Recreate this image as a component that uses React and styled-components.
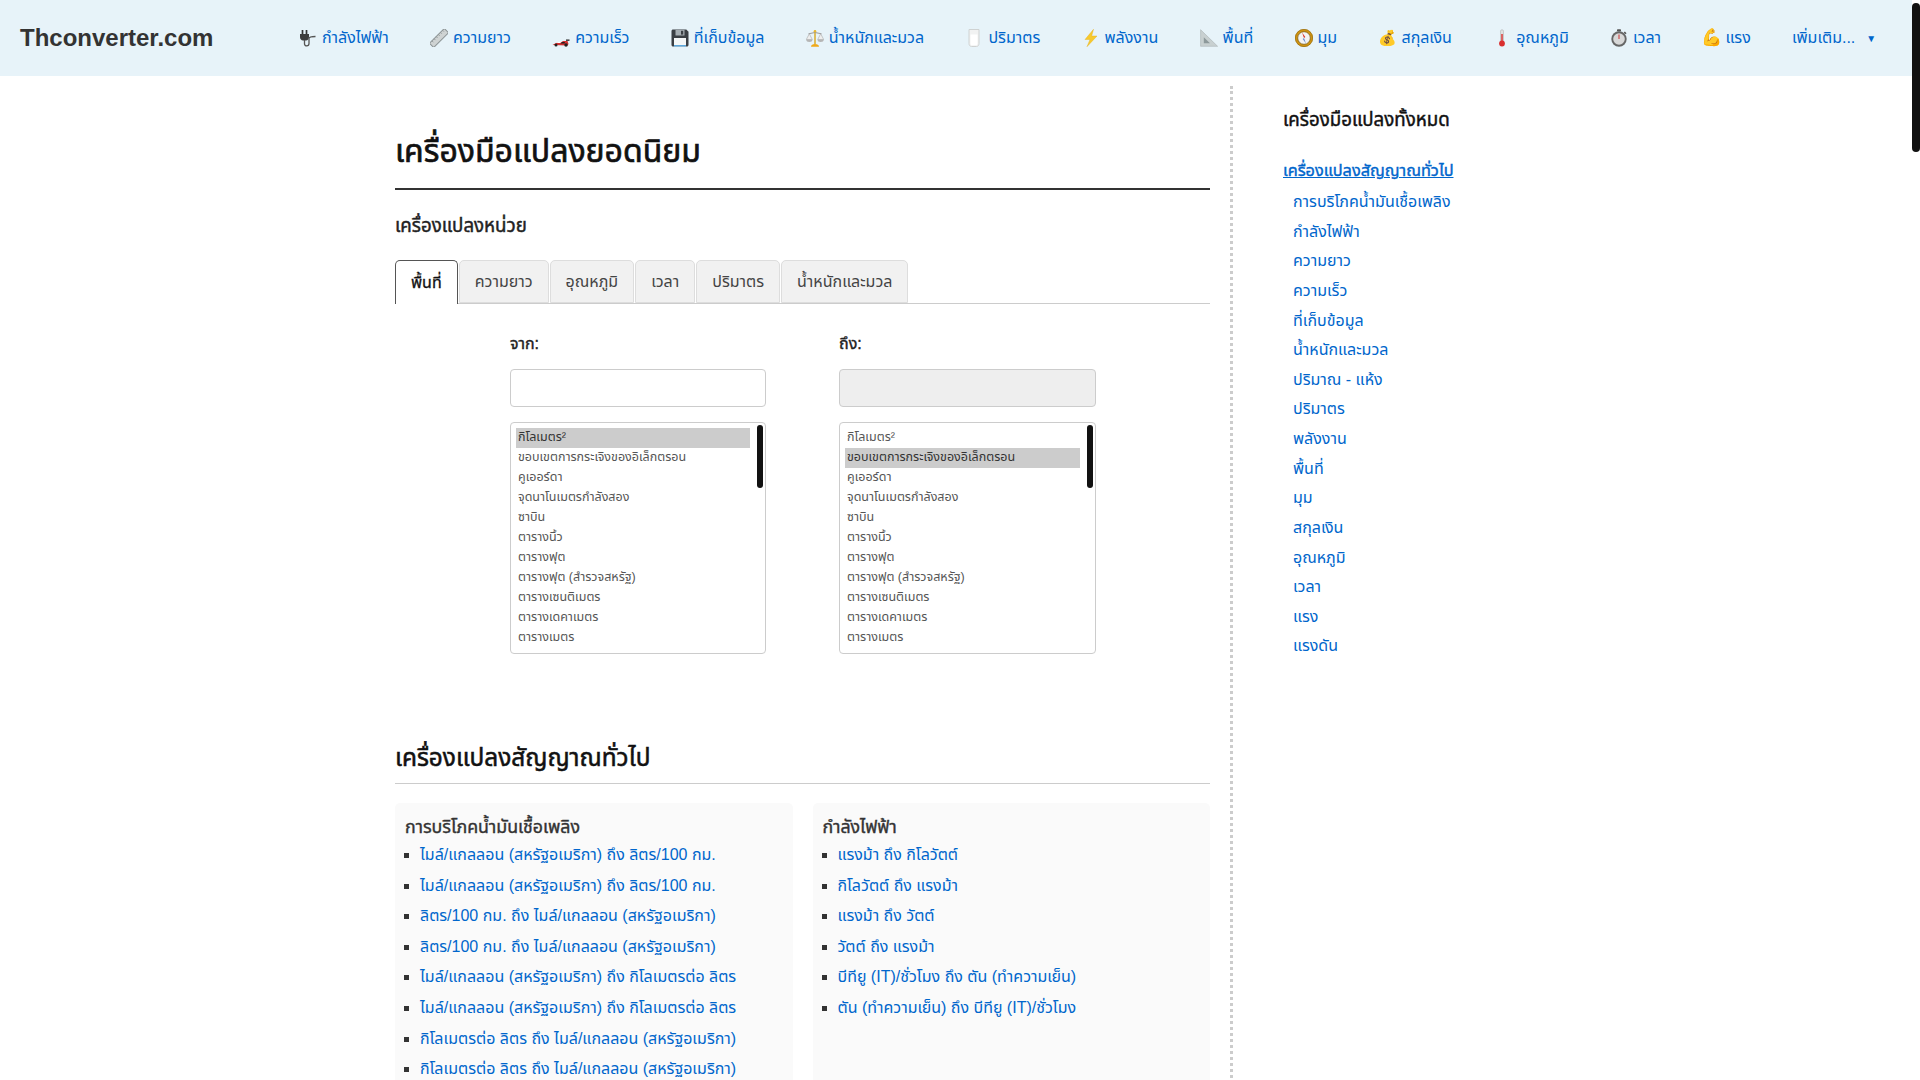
import React from "react";
import styled, { createGlobalStyle, css } from "styled-components";

const Global = createGlobalStyle`
  html, body { overflow-x: hidden; }
  body { margin: 0; background: #fff; color: #333; font-family: "Liberation Sans", "Noto Sans Thai", Arial, sans-serif; font-size: 16px; }
  * { box-sizing: border-box; }
`;
const heavy = w => css` font-weight: 400; -webkit-text-stroke: ${w}px currentColor; `;

const Shell = styled.div` width: 1912px; `;
const PageThumb = styled.div` position: fixed; top: 3px; right: 0; width: 8px; height: 149px; background: #111; border-radius: 4px; `;
const Nav = styled.header` display: flex; align-items: center; height: 76px; background: #e7f3f9; padding-left: 20px; `;
const Logo = styled.a` font-size: 24px; font-weight: 700; color: #333; text-decoration: none; width: 279px; flex: none; `;
const NavLink = styled.a` display: flex; align-items: center; gap: 5px; color: #0066cc; text-decoration: none; margin-right: 41.3px; white-space: nowrap; `;
const IconBox = styled.span` display: inline-flex; align-items: center; justify-content: center; width: 18px; height: 18px; flex: none; line-height: 18px; font-size: ${p => p.$size || 15}px; `;
const Caret = styled.span` font-size: 10px; margin-left: 6px; `;
const Page = styled.div` display: grid; grid-template-columns: 1233px 1fr; `;
const Main = styled.main` padding: 10px 20px 0 395px; margin-top: 10px; border-right: 3px dotted #ccc; `;
const H1 = styled.h1` margin: 31px 0 0; padding-bottom: 13px; font-size: 32px; line-height: 48px; ${heavy(0.7)} color: #111; border-bottom: 2px solid #333; `;
const H2 = styled.h2` margin: 21px 0 19px; font-size: 18.7px; line-height: 30px; ${heavy(0.45)} color: #222; `;
const Tabs = styled.div` display: flex; gap: 1px; border-bottom: 1px solid #ccc; height: 44px; `;
const Tab = styled.button`
  font: inherit; height: ${p => (p.$active ? 44 : 43)}px; padding: 0 15px; color: ${p => (p.$active ? "#111" : "#444")};
  background: ${p => (p.$active ? "#fff" : "#f1f1f1")}; border: 1px solid ${p => (p.$active ? "#555" : "#ddd")};
  border-bottom: ${p => (p.$active ? "none" : "1px solid #ddd")}; border-radius: 5px 5px 0 0;
  ${p => p.$active && "-webkit-text-stroke: 0.3px currentColor;"}
`;
const Converter = styled.div` display: grid; grid-template-columns: 256px 257px; column-gap: 73px; padding: 24px 0 0 115px; `;
const Column = styled.div` display: flex; flex-direction: column; `;
const Label = styled.label` font-size: 16px; ${heavy(0.4)} line-height: 32px; margin-bottom: 9px; color: #222; `;
const Input = styled.input` height: 38px; margin-bottom: 15px; border: 1px solid #ccc; border-radius: 4px; background: ${p => (p.readOnly ? "#eee" : "#fff")}; `;
const ListBox = styled.div` position: relative; height: 232px; `;
const List = styled.select`
  display: block; width: 100%; height: 232px; padding: 5px 15px 5px 5px; border: 1px solid #ccc; border-radius: 4px; background: #fff; font-family: inherit; font-size: 12.5px; color: #555; outline: none; overflow: hidden;
  option { height: 20px; line-height: 20px; min-height: 20px; padding: 0 2px; }
  option:checked { background: #ccc; color: #333; }
`;
const ListThumb = styled.div` position: absolute; top: 3px; right: 3px; width: 6px; height: 63px; background: #111; border-radius: 3px; `;
const SectionTitle = styled.h2` margin: 84px 0 19px; padding-bottom: 5px; font-size: 24.4px; line-height: 40px; ${heavy(0.55)} color: #111; border-bottom: 1px solid #ccc; `;
const Cards = styled.div` display: grid; grid-template-columns: 1fr 1fr; gap: 20px; `;
const Card = styled.section` background: #fafafa; border-radius: 5px; padding: 11px 10px; min-height: 400px; `;
const CardTitle = styled.h3` margin: 0; font-size: 17.8px; line-height: 26px; ${heavy(0.4)} color: #333; `;
const Links = styled.ul` margin: 0; padding: 0 0 0 15px; list-style: square; `;
const Item = styled.li` height: 30.6px; line-height: 30.6px; `;
const A = styled.a` color: #0066cc; text-decoration: none; `;
const Side = styled.aside` padding: 20px 0 0 50px; margin-top: 10px; `;
const SideTitle = styled.h3` margin: 0 0 20px; font-size: 18.7px; line-height: 28px; ${heavy(0.45)} color: #111; `;
const SideHead = styled.a` display: block; font-size: 16.3px; ${heavy(0.4)} color: #0066cc; text-decoration: underline; line-height: 32px; margin-bottom: 1px; `;
const SideLink = styled.a` display: block; margin-left: 10px; color: #0066cc; line-height: 29.63px; text-decoration: none; `;

const Svg = ({ children }) => <svg width="18" height="18" viewBox="0 0 18 18" fill="none">{children}</svg>;
const icons = {
  plug: <Svg><path d="M3.500 1v5M7.500 1v5" stroke="#333" strokeWidth="1.700"/><path d="M1 5h9v3c0 2-1.300 3.500-3 3.500H4C2.300 11.500 1 10 1 8z" fill="#3d3d3d"/><path d="M5.500 11v4c0 2.500 4.500 2.500 4.500-.5V9.500C10 8 11.500 7.500 16.500 7.500" stroke="#555" strokeWidth="1.300"/></Svg>,
  ruler: <Svg><g transform="rotate(-45 9 9)"><rect x="-1.500" y="6" width="21" height="6" rx=".5" fill="#cfd3d3" stroke="#8d9496"/><path d="M2 6v2M5 6v2M8 6v2M11 6v2M14 6v2M17 6v2" stroke="#8d9496" strokeWidth=".8"/></g></Svg>,
  car: <Svg><path d="M.5 16l3.500-2 5-.5 2-1.500h4.500l1 3-1 1.500z" fill="#d32f2f"/><path d="M5 14h3l1-1H6z" fill="#fff"/><path d="M8.500 14.500h4l.5-1.500H10z" fill="#222"/><rect x="14" y="10.500" width="3.500" height="1.300" fill="#222"/><circle cx="4" cy="16" r="1.500" fill="#222"/><circle cx="14" cy="16" r="1.700" fill="#222"/></Svg>,
  floppy: <Svg><path d="M.5 2C.5 1.200 1.200.5 2 .5h13.300l2.200 2.200V16c0 .8-.7 1.500-1.500 1.500H2c-.8 0-1.500-.7-1.500-1.500z" fill="#3a3f44"/><rect x="4.500" y="1" width="9" height="5.500" fill="#a5adb2"/><rect x="10" y="1.800" width="2.200" height="3.800" fill="#3a3f44"/><rect x="3" y="9" width="12" height="8.500" fill="#f4f7f8"/><rect x="3" y="16" width="12" height="1.500" fill="#5fa8dc"/></Svg>,
  scales: <Svg><path d="M9 1.500V15" stroke="#d8ab2a" strokeWidth="1.500"/><path d="M2.500 4.800L9 3.500 15.500 4.800" stroke="#999" strokeWidth="1"/><path d="M0.300 10.500L3.300 4.800l3 5.700zM11.700 10.500l3-5.700 3 5.700z" fill="#eee" stroke="#aaa" strokeWidth=".6"/><path d="M.2 10.500h6.300c0 1.700-1.200 2.500-3.150 2.500S.2 12.200.2 10.500zM11.500 10.500h6.300c0 1.700-1.200 2.500-3.150 2.500s-3.150-.8-3.150-2.500z" fill="#b5b5b5"/><path d="M5 17.800c0-2 1.700-2.800 4-2.800s4 .8 4 2.800z" fill="#f0a818"/><circle cx="9" cy="2.300" r="1.300" fill="#e8b730"/></Svg>,
  glass: <Svg><path d="M4 .5h10v14c0 1.700-1 3-2.500 3h-5C5 17.500 4 16.200 4 14.500z" fill="#f1f2f2" stroke="#cfd2d2" strokeWidth="1"/><path d="M5.500 5.500h7v9c0 1.200-.7 1.800-1.500 1.800H7c-.8 0-1.500-.6-1.500-1.800z" fill="#fff"/></Svg>,
  bolt: <Svg><path d="M11.500 .3L3 10.500h5L5 17.700 15 7H9.700z" fill="#f7c92d" stroke="#e6ad17" strokeWidth=".4"/></Svg>,
  tri: <Svg><path d="M.6 17.300V.7L17.600 17.300z" fill="#c8d0d1" stroke="#a9b2b4" strokeWidth=".6"/><path d="M3.800 14.200V8.200L10 14.200z" fill="#8d999b"/></Svg>,
  compass: <Svg><circle cx="9" cy="9" r="9" fill="#cf9311"/><circle cx="9" cy="9" r="8.700" fill="none" stroke="#8c6410" strokeWidth=".6"/><circle cx="9" cy="9" r="6.300" fill="#f3f3f3" stroke="#6e5413" strokeWidth=".7"/><path d="M9 9L7 3.500 10.300 8z" fill="#d93025"/><path d="M9 9l2 5.500L7.700 10z" fill="#6a8bc9"/></Svg>,
  thermo: <Svg><rect x="7.500" y=".7" width="3" height="12.500" rx="1.500" fill="#e0e0e0" stroke="#aaa" strokeWidth=".5"/><rect x="8.300" y="5" width="1.400" height="9" fill="#d92f2f"/><circle cx="9" cy="14.500" r="2.900" fill="#d92f2f"/></Svg>,
  watch: <Svg><rect x="7" y=".3" width="4" height="2.200" rx=".7" fill="#555"/><path d="M14.300 3l1.700 1.700" stroke="#555" strokeWidth="1.600"/><circle cx="9" cy="10" r="7.700" fill="#666"/><circle cx="9" cy="10" r="5.800" fill="#d8d8d8"/><path d="M9 10V5.500" stroke="#c33" strokeWidth="1"/></Svg>,
};
const emoji = { "💰": 15, "💪": 17 };
const nav = [["plug","กำลังไฟฟ้า"],["ruler","ความยาว"],["car","ความเร็ว"],["floppy","ที่เก็บข้อมูล"],["scales","น้ำหนักและมวล"],["glass","ปริมาตร"],["bolt","พลังงาน"],["tri","พื้นที่"],["compass","มุม"],["💰","สกุลเงิน"],["thermo","อุณหภูมิ"],["watch","เวลา"],["💪","แรง"]];
const tabs = ["พื้นที่","ความยาว","อุณหภูมิ","เวลา","ปริมาตร","น้ำหนักและมวล"];
const units = ["กิโลเมตร²","ขอบเขตการกระเจิงของอิเล็กตรอน","คูเออร์ดา","จุดนาโนเมตรกำลังสอง","ซาบิน","ตารางนิ้ว","ตารางฟุต","ตารางฟุต (สำรวจสหรัฐ)","ตารางเซนติเมตร","ตารางเดคาเมตร","ตารางเมตร"];
const fuel = ["ไมล์/แกลลอน (สหรัฐอเมริกา) ถึง ลิตร/100 กม.","ไมล์/แกลลอน (สหรัฐอเมริกา) ถึง ลิตร/100 กม.","ลิตร/100 กม. ถึง ไมล์/แกลลอน (สหรัฐอเมริกา)","ลิตร/100 กม. ถึง ไมล์/แกลลอน (สหรัฐอเมริกา)","ไมล์/แกลลอน (สหรัฐอเมริกา) ถึง กิโลเมตรต่อ ลิตร","ไมล์/แกลลอน (สหรัฐอเมริกา) ถึง กิโลเมตรต่อ ลิตร","กิโลเมตรต่อ ลิตร ถึง ไมล์/แกลลอน (สหรัฐอเมริกา)","กิโลเมตรต่อ ลิตร ถึง ไมล์/แกลลอน (สหรัฐอเมริกา)"];
const power = ["แรงม้า ถึง กิโลวัตต์","กิโลวัตต์ ถึง แรงม้า","แรงม้า ถึง วัตต์","วัตต์ ถึง แรงม้า","บีทียู (IT)/ชั่วโมง ถึง ตัน (ทำความเย็น)","ตัน (ทำความเย็น) ถึง บีทียู (IT)/ชั่วโมง"];
const side = ["การบริโภคน้ำมันเชื้อเพลิง","กำลังไฟฟ้า","ความยาว","ความเร็ว","ที่เก็บข้อมูล","น้ำหนักและมวล","ปริมาณ - แห้ง","ปริมาตร","พลังงาน","พื้นที่","มุม","สกุลเงิน","อุณหภูมิ","เวลา","แรง","แรงดัน"];

const UnitList = ({ selected }) => (
  <ListBox>
    <List multiple size={11} defaultValue={[units[selected]]}>{units.map(u => <option key={u}>{u}</option>)}</List>
    <ListThumb />
  </ListBox>
);

export default function App() {
  return (
    <Shell>
      <Global />
      <PageThumb />
      <Nav>
        <Logo href="#">Thconverter.com</Logo>
        {nav.map(([k, t]) => (
          <NavLink href="#" key={t}>
            <IconBox $size={emoji[k]}>{icons[k] || k}</IconBox>
            {t}
          </NavLink>
        ))}
        <NavLink href="#">เพิ่มเติม...<Caret>▼</Caret></NavLink>
      </Nav>
      <Page>
        <Main>
          <H1>เครื่องมือแปลงยอดนิยม</H1>
          <H2>เครื่องแปลงหน่วย</H2>
          <Tabs>{tabs.map((t, i) => <Tab key={t} $active={i === 0}>{t}</Tab>)}</Tabs>
          <Converter>
            <Column>
              <Label>จาก:</Label>
              <Input />
              <UnitList selected={0} />
            </Column>
            <Column>
              <Label>ถึง:</Label>
              <Input readOnly />
              <UnitList selected={1} />
            </Column>
          </Converter>
          <SectionTitle>เครื่องแปลงสัญญาณทั่วไป</SectionTitle>
          <Cards>
            <Card><CardTitle>การบริโภคน้ำมันเชื้อเพลิง</CardTitle><Links>{fuel.map((f, i) => <Item key={i}><A href="#">{f}</A></Item>)}</Links></Card>
            <Card><CardTitle>กำลังไฟฟ้า</CardTitle><Links>{power.map((f, i) => <Item key={i}><A href="#">{f}</A></Item>)}</Links></Card>
          </Cards>
        </Main>
        <Side>
          <SideTitle>เครื่องมือแปลงทั้งหมด</SideTitle>
          <SideHead href="#">เครื่องแปลงสัญญาณทั่วไป</SideHead>
          {side.map(s => <SideLink href="#" key={s}>{s}</SideLink>)}
        </Side>
      </Page>
    </Shell>
  );
}
